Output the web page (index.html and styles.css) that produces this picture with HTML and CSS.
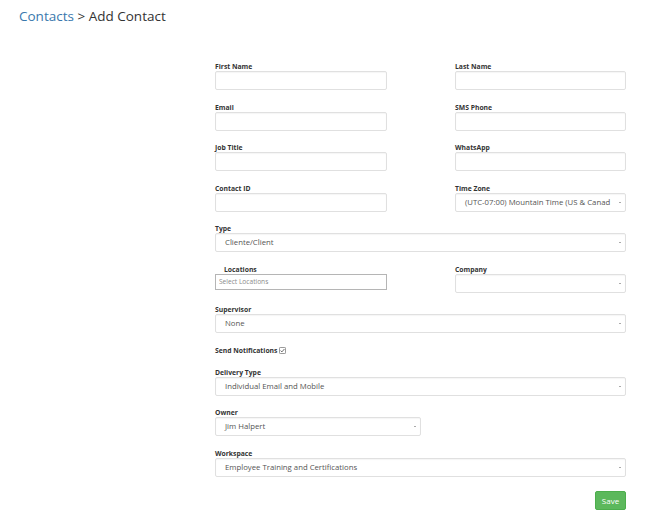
FILE: index.html
```html
<!DOCTYPE html>
<html lang="en">
<head>
    <meta charset="UTF-8">
    <meta name="viewport" content="width=device-width, initial-scale=1.0">
    <title>Add Contact</title>
    <link rel="stylesheet" href="styles.css">
</head>
<body>
    <h2 class="page-title"><a href="#" class="crumb">Contacts</a> &gt; Add Contact</h2>

    <form class="contact-form">
        <div class="field">
            <label>First Name</label>
            <input type="text" class="control">
        </div>
        <div class="field">
            <label>Last Name</label>
            <input type="text" class="control">
        </div>

        <div class="field">
            <label>Email</label>
            <input type="text" class="control">
        </div>
        <div class="field">
            <label>SMS Phone</label>
            <input type="text" class="control">
        </div>

        <div class="field">
            <label>Job Title</label>
            <input type="text" class="control">
        </div>
        <div class="field">
            <label>WhatsApp</label>
            <input type="text" class="control">
        </div>

        <div class="field">
            <label>Contact ID</label>
            <input type="text" class="control">
        </div>
        <div class="field">
            <label>Time Zone</label>
            <div class="select">(UTC-07:00) Mountain Time (US &amp; Canad</div>
        </div>

        <div class="field wide">
            <label>Type</label>
            <div class="select">Cliente/Client</div>
        </div>

        <div class="field">
            <label class="indent">Locations</label>
            <input type="text" class="control locations" placeholder="Select Locations">
        </div>
        <div class="field">
            <label>Company</label>
            <div class="select"></div>
        </div>

        <div class="field wide">
            <label>Supervisor</label>
            <div class="select">None</div>
        </div>

        <div class="field wide check-row">
            <label>Send Notifications
                <svg class="check" width="8" height="8" viewBox="0 0 8 8">
                    <rect x="0.5" y="0.5" width="7" height="7" rx="1" fill="#fff" stroke="#666" stroke-width="0.8"/>
                    <path d="M1.8 4.1 L3.3 5.6 L6.2 2.3" fill="none" stroke="#444" stroke-width="0.9"/>
                </svg>
            </label>
        </div>

        <div class="field wide">
            <label>Delivery Type</label>
            <div class="select">Individual Email and Mobile</div>
        </div>

        <div class="field wide">
            <label>Owner</label>
            <div class="select half">Jim Halpert</div>
        </div>

        <div class="field wide">
            <label>Workspace</label>
            <div class="select">Employee Training and Certifications</div>
        </div>

        <div class="actions wide">
            <button type="button" class="btn-save">Save</button>
        </div>
    </form>
</body>
</html>
```

FILE: styles.css
```css
body {
    margin: 0;
    font-family: "Open Sans", "DejaVu Sans", sans-serif;
    color: #333;
    background: #fff;
}

.page-title {
    margin: 0;
    padding: 7px 0 0 19px;
    font-size: 13.5px;
    line-height: 18px;
    font-weight: 400;
    color: #333;
}

.crumb {
    color: #3a78ad;
    text-decoration: none;
}

.contact-form {
    display: grid;
    grid-template-columns: 172px 171px;
    column-gap: 68px;
    width: 411px;
    margin: 37px 0 0 215px;
}

.field {
    margin-bottom: 12.5px;
}

.wide {
    grid-column: 1 / span 2;
}

.field label {
    display: block;
    height: 9px;
    line-height: 9px;
    font-size: 6.8px;
    font-weight: 700;
    color: #333;
}

.field label.indent {
    padding-left: 9px;
}

.control,
.select {
    display: block;
    box-sizing: border-box;
    width: 100%;
    height: 19px;
    margin: 0;
    padding: 0 9px;
    border: 1px solid #e0e0e0;
    border-radius: 2px;
    background: #fff;
    box-shadow: inset 0 1px 1px rgba(0, 0, 0, 0.04);
    font-family: inherit;
    font-size: 7.75px;
    line-height: 17px;
    color: #555;
    outline: none;
}

.select {
    position: relative;
    white-space: nowrap;
    overflow: hidden;
}

.select::after {
    content: "";
    position: absolute;
    right: 4px;
    top: 8px;
    width: 2px;
    height: 1px;
    background: #aaa;
}

.select.half {
    width: 206px;
}

.control.locations {
    height: 16px;
    margin-bottom: 3px;
    padding: 0 3px;
    border-color: #b5b5b5;
    border-radius: 0;
    box-shadow: none;
    font-size: 6.6px;
}

.control.locations::placeholder {
    color: #8a8a8a;
}

.check-row {
    margin-bottom: 13px;
}

.check-row label {
    display: flex;
    align-items: center;
    gap: 2px;
}

.check {
    display: block;
    width: 7px;
    height: 7px;
}

.actions {
    display: flex;
    justify-content: flex-end;
    padding-top: 1.5px;
}

.btn-save {
    width: 31px;
    height: 19px;
    padding: 0;
    border: 1px solid #4cae4c;
    border-radius: 2px;
    background: #5cb85c;
    color: #fff;
    font-family: inherit;
    font-size: 8px;
}
```
